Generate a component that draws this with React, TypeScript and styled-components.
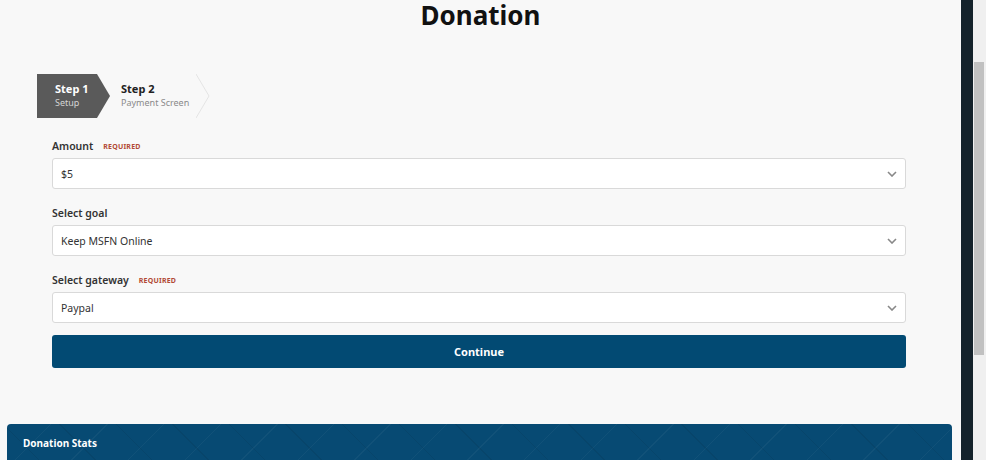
import React from 'react';
import styled, { createGlobalStyle } from 'styled-components';

const GlobalStyle = createGlobalStyle`
    html, body {
        margin: 0;
        padding: 0;
        background: #ffffff;
    }
    body {
        font-family: "Noto Sans", "Open Sans", "Liberation Sans", sans-serif;
        color: #333;
    }
`;

const StyledWindow = styled.div`
    display: flex;
    width: 1000px;
    height: 460px;
    overflow: hidden;
`;

const StyledMain = styled.div`
    width: 961px;
    flex-shrink: 0;
    background: #f8f8f8;
`;

const StyledSideBar = styled.div`
    width: 12px;
    flex-shrink: 0;
    background: #14222b;
`;

const StyledScrollTrack = styled.div`
    width: 13px;
    flex-shrink: 0;
    background: #f0f0f0;
    padding-top: 62px;
    box-sizing: border-box;
`;

const StyledScrollThumb = styled.div`
    margin-left: 1px;
    width: 10px;
    height: 293px;
    background: #c1c1c1;
`;

const StyledTitle = styled.h1`
    margin: 0;
    padding-top: 2px;
    font-size: 26px;
    line-height: 26px;
    font-weight: 700;
    text-align: center;
    color: #111;
`;

const StyledSection = styled.div`
    padding: 46px 55px 0 37px;
`;

const StyledSteps = styled.div`
    display: flex;
    height: 44px;
`;

const StyledStep = styled.div<{ active?: boolean }>`
    position: relative;
    display: flex;
    flex-direction: column;
    justify-content: center;
    width: ${(p) => (p.active ? '60px' : '86px')};
    padding-left: ${(p) => (p.active ? '18px' : '11px')};
    background: ${(p) => (p.active ? '#5a5a5a' : 'transparent')};
    margin-right: ${(p) => (p.active ? '13px' : '0')};
    box-sizing: border-box;
`;

const StyledArrow = styled.svg`
    position: absolute;
    top: 0;
    left: 100%;
`;

const StyledStepTitle = styled.div<{ active?: boolean }>`
    font-size: 11px;
    font-weight: 700;
    line-height: 14px;
    color: ${(p) => (p.active ? '#ffffff' : '#222')};
    white-space: nowrap;
`;

const StyledStepSub = styled.div<{ active?: boolean }>`
    font-size: 9px;
    line-height: 14px;
    color: ${(p) => (p.active ? '#d4d4d4' : '#8a8a8a')};
    white-space: nowrap;
`;

const StyledForm = styled.div`
    margin: 21px 0 0 15px;
`;

const StyledGroup = styled.div`
    margin-bottom: 17px;
`;

const StyledLabel = styled.div`
    display: flex;
    align-items: center;
    height: 14px;
    font-size: 10.5px;
    font-weight: 600;
    color: #333;
    margin-bottom: 5px;
`;

const StyledRequired = styled.span`
    margin-left: 10px;
    font-size: 7px;
    font-weight: 700;
    letter-spacing: 0.2px;
    color: #b24a36;
`;

const StyledSelect = styled.div`
    display: flex;
    align-items: center;
    justify-content: space-between;
    height: 31px;
    padding: 0 8px 0 8px;
    background: #ffffff;
    border: 1px solid #d9d9d9;
    border-radius: 3px;
    box-sizing: border-box;
    font-size: 10.5px;
    color: #333;
`;

const StyledButton = styled.div`
    display: flex;
    align-items: center;
    justify-content: center;
    height: 33px;
    margin-top: -5px;
    background: #024a73;
    border-radius: 3px;
    color: #ffffff;
    font-size: 11px;
    font-weight: 700;
`;

const StyledStats = styled.div`
    margin: 56px 9px 0 7px;
    height: 60px;
    border-radius: 4px 4px 0 0;
    background-color: #074a73;
    background-image:
        repeating-linear-gradient(45deg, transparent 0, transparent 39px, rgba(0,0,0,0.07) 39px, rgba(0,0,0,0.07) 40px),
        repeating-linear-gradient(-45deg, transparent 0, transparent 39px, rgba(255,255,255,0.04) 39px, rgba(255,255,255,0.04) 40px);
    padding: 12px 16px;
    box-sizing: border-box;
    color: #ffffff;
    font-size: 10px;
    font-weight: 700;
`;

const Chevron = () => (
    <svg width="10" height="6" viewBox="0 0 10 6">
        <path d="M1 1 L5 5 L9 1" fill="none" stroke="#888" strokeWidth="1.6" />
    </svg>
);

interface IField {
    label: string;
    value: string;
    required: boolean;
}

const fields: IField[] = [
    { label: 'Amount', value: '$5', required: true },
    { label: 'Select goal', value: 'Keep MSFN Online', required: false },
    { label: 'Select gateway', value: 'Paypal', required: true },
];

const App = () => {
    return (
        <StyledWindow>
            <GlobalStyle />
            <StyledMain>
                <StyledTitle>Donation</StyledTitle>
                <StyledSection>
                    <StyledSteps>
                        <StyledStep active>
                            <StyledStepTitle active>Step 1</StyledStepTitle>
                            <StyledStepSub active>Setup</StyledStepSub>
                            <StyledArrow width="13" height="44" viewBox="0 0 13 44">
                                <path d="M0 0 L13 22 L0 44 Z" fill="#5a5a5a" />
                            </StyledArrow>
                        </StyledStep>
                        <StyledStep>
                            <StyledStepTitle>Step 2</StyledStepTitle>
                            <StyledStepSub>Payment Screen</StyledStepSub>
                            <StyledArrow width="14" height="44" viewBox="0 0 14 44">
                                <path d="M0 0 L13 22 L0 44" fill="none" stroke="#e4e4e4" strokeWidth="1" />
                            </StyledArrow>
                        </StyledStep>
                    </StyledSteps>
                    <StyledForm>
                        {fields.map((each, i) => (
                            <StyledGroup key={i}>
                                <StyledLabel>
                                    {each.label}
                                    {each.required && <StyledRequired>REQUIRED</StyledRequired>}
                                </StyledLabel>
                                <StyledSelect>
                                    <span>{each.value}</span>
                                    <Chevron />
                                </StyledSelect>
                            </StyledGroup>
                        ))}
                        <StyledButton>Continue</StyledButton>
                    </StyledForm>
                </StyledSection>
                <StyledStats>Donation Stats</StyledStats>
            </StyledMain>
            <StyledSideBar />
            <StyledScrollTrack>
                <StyledScrollThumb />
            </StyledScrollTrack>
        </StyledWindow>
    );
};

export default App;
